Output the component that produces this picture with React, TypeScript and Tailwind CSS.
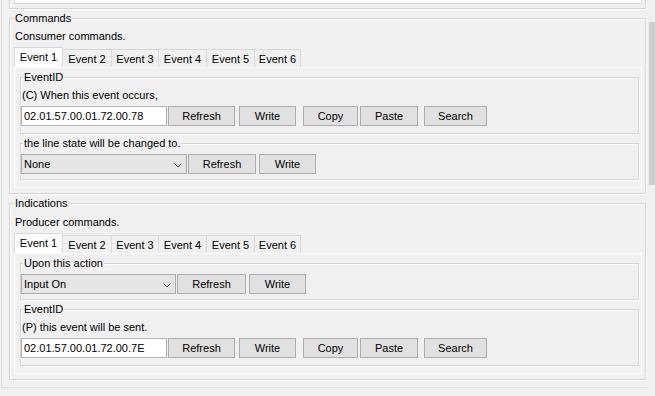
import React from "react";

type TitledProps = {
  title: string;
  className: string;
  titleClass: string;
  children?: React.ReactNode;
};

function Titled({ title, className, titleClass, children }: TitledProps) {
  return (
    <div
      className={`relative border border-[#d5d5d5] shadow-[inset_1px_1px_0_#ffffff,1px_1px_0_#ffffff] ${className}`}
    >
      <span className={`absolute top-[-7px] bg-[#f0f0f0] px-[1px] leading-[13px] ${titleClass}`}>{title}</span>
      {children}
    </div>
  );
}

function Btn({ label, cls }: { label: string; cls: string }) {
  return (
    <div
      className={`flex h-[20px] shrink-0 items-center justify-center border border-[#adadad] bg-[#e1e1e1] ${cls}`}
    >
      {label}
    </div>
  );
}

function Combo({ value, cls }: { value: string; cls: string }) {
  return (
    <div
      className={`flex h-[20px] shrink-0 items-center justify-between border border-[#acacac] bg-[#e5e5e5] pl-[2px] pr-[4px] ${cls}`}
    >
      <span>{value}</span>
      <svg width="8" height="5" viewBox="0 0 8 5" className="mt-[2px]">
        <polyline points="0.5,0.5 4,4 7.5,0.5" fill="none" stroke="#5a5a5a" strokeWidth="1" />
      </svg>
    </div>
  );
}

function EventRow({ id }: { id: string }) {
  return (
    <div className="mt-[4px] flex">
      <div className="flex h-[20px] w-[146px] shrink-0 items-center border border-[#b4b4b4] bg-white pl-[2px]">
        {id}
      </div>
      <Btn label="Refresh" cls="ml-[1px] w-[67px]" />
      <Btn label="Write" cls="ml-[4px] w-[57px]" />
      <Btn label="Copy" cls="ml-[7px] w-[55px]" />
      <Btn label="Paste" cls="ml-[2px] w-[58px]" />
      <Btn label="Search" cls="ml-[6px] w-[63px]" />
    </div>
  );
}

function Tabs() {
  return (
    <div className="mt-[4px] flex h-[20px] items-end">
      <div className="flex h-[20px] w-[49px] items-center justify-center border-x border-t border-[#d9d9d9] bg-white">
        Event 1
      </div>
      <div className="flex h-[18px] w-[49px] items-center justify-center border-r border-t border-[#d9d9d9] pt-[1px]">
        Event 2
      </div>
      <div className="flex h-[18px] w-[47px] items-center justify-center border-r border-t border-[#d9d9d9] pt-[1px]">
        Event 3
      </div>
      <div className="flex h-[18px] w-[48px] items-center justify-center border-r border-t border-[#d9d9d9] pt-[1px]">
        Event 4
      </div>
      <div className="flex h-[18px] w-[48px] items-center justify-center border-r border-t border-[#d9d9d9] pt-[1px]">
        Event 5
      </div>
      <div className="flex h-[18px] w-[46px] items-center justify-center border-r border-t border-[#d9d9d9] pt-[1px]">
        Event 6
      </div>
    </div>
  );
}

export default function App() {
  return (
    <div className="flex h-[396px] w-[655px] overflow-hidden bg-[#f0f0f0] text-[11px] leading-[13px] text-black [font-family:'Liberation_Sans',Arial,sans-serif]">
      <div className="w-[648px] shrink-0">
        <div className="ml-[1px] w-[647px] border-b border-l border-[#dcdcdc] pb-[7px]">
          {/* remnant of the section above */}
          <div className="ml-[7px] h-[9px] w-[637px] border-x border-b border-[#d5d5d5] shadow-[inset_1px_0_0_#ffffff,1px_1px_0_#ffffff]">
            <div className="ml-[4px] h-[4px] w-[628px] border-x border-b border-[#d9d9d9] bg-white" />
          </div>

          {/* Commands */}
          <Titled title="Commands" titleClass="left-[4px]" className="ml-[7px] mt-[9px] w-[637px] pb-[5px] pl-[4px] pt-[11px]">
            <div className="ml-[1px] h-[13px]">Consumer commands.</div>
            <Tabs />
            <div className="w-[628px] border border-white pb-[7px] pl-[5px] pr-[2px] pt-[9px]">
              <Titled title="EventID" titleClass="left-[2px]" className="pb-[7px] pt-[11px]">
                <div className="h-[13px] pl-[1px]">(C) When this event occurs,</div>
                <EventRow id="02.01.57.00.01.72.00.78" />
              </Titled>
              <Titled title="the line state will be changed to." titleClass="left-[2px]" className="mt-[9px] pb-[5px] pt-[10px]">
                <div className="flex">
                  <Combo value="None" cls="w-[166px]" />
                  <Btn label="Refresh" cls="ml-[1px] w-[68px]" />
                  <Btn label="Write" cls="ml-[3px] w-[57px]" />
                </div>
              </Titled>
            </div>
          </Titled>

          {/* Indications */}
          <Titled title="Indications" titleClass="left-[4px]" className="ml-[7px] mt-[9px] w-[637px] pb-[5px] pl-[4px] pt-[12px]">
            <div className="ml-[1px] h-[13px]">Producer commands.</div>
            <Tabs />
            <div className="w-[628px] border border-white pb-[7px] pl-[5px] pr-[2px] pt-[9px]">
              <Titled title="Upon this action" titleClass="left-[2px]" className="pb-[5px] pt-[10px]">
                <div className="flex">
                  <Combo value="Input On" cls="w-[155px]" />
                  <Btn label="Refresh" cls="ml-[1px] w-[69px]" />
                  <Btn label="Write" cls="ml-[3px] w-[57px]" />
                </div>
              </Titled>
              <Titled title="EventID" titleClass="left-[2px]" className="mt-[9px] pb-[7px] pt-[11px]">
                <div className="h-[13px] pl-[1px]">(P) this event will be sent.</div>
                <EventRow id="02.01.57.00.01.72.00.7E" />
              </Titled>
            </div>
          </Titled>
        </div>
      </div>
      <div className="w-[7px] shrink-0 pl-[1px]">
        <div className="mt-[22px] h-[163px] bg-[#cdcdcd]" />
      </div>
    </div>
  );
}
